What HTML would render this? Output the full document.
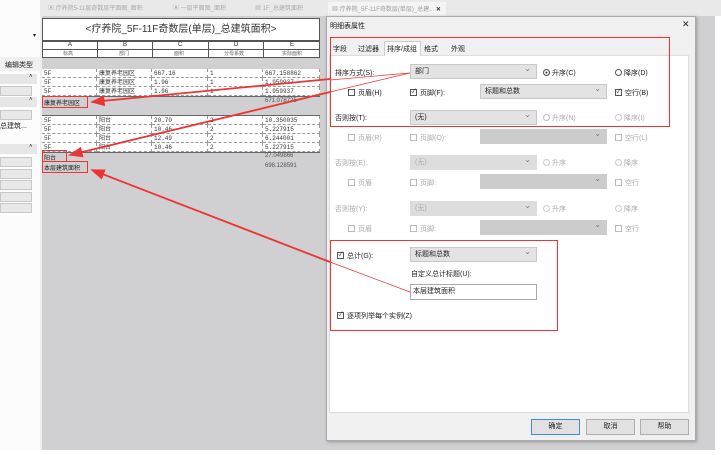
<!DOCTYPE html>
<html><head><meta charset="utf-8"><style>
*{margin:0;padding:0;box-sizing:border-box}
body{width:721px;height:455px;background:#fff;position:relative;overflow:hidden;font-family:"Liberation Sans","Noto Sans CJK SC",sans-serif;font-size:7px;color:#222}
.a{position:absolute}
.t{position:absolute;white-space:nowrap}
.cell{position:absolute;height:9px;border-right:1px dashed #999;border-bottom:1px dashed #999;font-size:6px;line-height:9px;padding-left:2px;background:#fff;color:#333;font-family:"Liberation Mono","Noto Sans CJK SC",monospace}
.dd{position:absolute;background:#e3e3e3;border:1px solid #c8c8c8;height:15px;font-size:7px;line-height:13px;padding-left:4px}
.dd:after{content:"⌄";position:absolute;right:5px;top:-3px;color:#777;font-size:8px}
.dis{color:#aaa}
.cb{position:absolute;width:7px;height:7px;border:1px solid #555;background:#fff;font-size:6px;line-height:5px;text-align:center}
.cbd{border-color:#bbb}
.rd{position:absolute;width:7px;height:7px;border:1px solid #555;border-radius:50%;background:#fff}
.btn{position:absolute;height:16px;width:49px;background:#e1e1e1;border:1px solid #adadad;text-align:center;line-height:14px;font-size:7px}
.lp{position:absolute;left:0;width:32px;height:10px;background:#e8e8e8;border:1px solid #c8c8c8}
</style></head><body>
<div class="a" style="left:40px;top:0;width:290px;height:16px;background:#e9e9e9"></div>
<div class="t" style="left:48px;top:3px;color:#aaa;font-size:6px">▣ 疗养院5-11层奇数层平面图_面积</div>
<div class="t" style="left:173px;top:3px;color:#aaa;font-size:6px">▣ 一层平面图_面积</div>
<div class="t" style="left:255px;top:3px;color:#aaa;font-size:6px">▦ 1F_总建筑面积</div>
<div class="a" style="left:328px;top:0;width:393px;height:16px;background:#e9e9e9"></div>
<div class="a" style="left:328px;top:2px;width:118px;height:14px;background:#f4f4f4"></div>
<div class="t" style="left:332px;top:4px;color:#999;font-size:6px">▦ 疗养院_5F-11F奇数层(单层)_总建... <b style="color:#333">✕</b></div>
<div class="a" style="left:0;top:0;width:40px;height:450px;background:#fcfcfc"></div>
<div class="t" style="left:33px;top:32px;font-size:6px">▾</div>
<div class="a" style="left:0;top:57px;width:40px;height:14px;background:#f0f0f0"></div>
<div class="t" style="left:5px;top:60px;font-size:7px">编辑类型</div>
<div class="a" style="left:0;top:74px;width:37px;height:10px;background:#e6e6e6"></div><div class="t" style="left:29px;top:74px;font-size:6px">˄</div>
<div class="lp" style="top:86px"></div>
<div class="a" style="left:0;top:97px;width:37px;height:10px;background:#e6e6e6"></div><div class="t" style="left:29px;top:97px;font-size:6px">˄</div>
<div class="lp" style="top:110px"></div>
<div class="t" style="left:0;top:121px;font-size:7px">总建筑...</div>
<div class="a" style="left:0;top:144px;width:37px;height:10px;background:#e6e6e6"></div><div class="t" style="left:29px;top:144px;font-size:6px">˄</div>
<div class="lp" style="top:157px"></div><div class="lp" style="top:169px"></div><div class="lp" style="top:180px"></div><div class="lp" style="top:192px"></div><div class="lp" style="top:203px"></div>
<div class="a" style="left:40px;top:16px;width:675px;height:434px;background:#d0cfd1;border-left:2px solid #eee"></div>
<div class="a" style="left:42px;top:18px;width:278px;height:23px;background:#fff;border:1px solid #555;font-size:10px;text-align:center;line-height:21px;color:#333">&lt;疗养院_5F-11F奇数层(单层)_总建筑面积&gt;</div>
<div class="a" style="left:42px;top:41px;width:278px;height:17px;background:#fff;border:1px solid #555"></div>
<div class="a" style="left:42px;top:49px;width:278px;height:1px;background:#555"></div>
<div class="t" style="left:68px;top:42px;font-size:6px">A</div><div class="t" style="left:123px;top:42px;font-size:6px">B</div><div class="t" style="left:178px;top:42px;font-size:6px">C</div><div class="t" style="left:234px;top:42px;font-size:6px">D</div><div class="t" style="left:290px;top:42px;font-size:6px">E</div>
<div class="t" style="left:63px;top:50px;font-size:5px;color:#666">标高</div><div class="t" style="left:119px;top:50px;font-size:5px;color:#666">部门</div><div class="t" style="left:174px;top:50px;font-size:5px;color:#666">面积</div><div class="t" style="left:224px;top:50px;font-size:5px;color:#666">分母系数</div><div class="t" style="left:282px;top:50px;font-size:5px;color:#666">实际面积</div>
<div class="a" style="left:97px;top:41px;width:1px;height:17px;background:#555"></div><div class="a" style="left:152px;top:41px;width:1px;height:17px;background:#555"></div><div class="a" style="left:208px;top:41px;width:1px;height:17px;background:#555"></div><div class="a" style="left:263px;top:41px;width:1px;height:17px;background:#555"></div>
<div class="a" style="left:42px;top:69px;width:278px;height:28px;border:1px solid #666;background:#fff"></div>
<div class="a" style="left:42px;top:115px;width:278px;height:38px;border:1px solid #666;background:#fff"></div>
<div id="rows"></div>
<div class="t" style="left:44px;top:98px;font-size:6px">康复养老园区</div><div class="t" style="left:265px;top:98px;font-size:6px;color:#555">671.078725</div>
<div class="t" style="left:44px;top:153px;font-size:6px">阳台</div><div class="t" style="left:265px;top:153px;font-size:6px;color:#555">27.049866</div>
<div class="t" style="left:44px;top:163px;font-size:6px">本层建筑面积</div><div class="t" style="left:265px;top:163px;font-size:6px;color:#555">698.128591</div>
<div class="a" style="left:42px;top:96px;width:46px;height:12px;border:1.5px solid #e33"></div>
<div class="a" style="left:42px;top:150px;width:25px;height:12px;border:1.5px solid #e33"></div>
<div class="a" style="left:42px;top:161px;width:46px;height:12px;border:1.5px solid #e33"></div>
<div class="a" style="left:326px;top:16px;width:370px;height:425px;background:#f0f0f0;border:1px solid #aaa;box-shadow:1px 1px 3px #999"></div>
<div class="t" style="left:330px;top:21px;font-size:7px">明细表属性</div>
<div class="t" style="left:682px;top:19px;font-size:9px">✕</div>
<div class="a" style="left:329px;top:55px;width:360px;height:358px;background:#fff;border:1px solid #ddd"></div>
<div class="a" style="left:384px;top:41px;width:37px;height:15px;background:#fff;border:1px solid #ccc;border-bottom:none"></div>
<div class="t" style="left:333px;top:44px;font-size:7px">字段</div>
<div class="t" style="left:358px;top:44px;font-size:7px">过滤器</div>
<div class="t" style="left:387px;top:44px;font-size:7px">排序/成组</div>
<div class="t" style="left:424px;top:44px;font-size:7px">格式</div>
<div class="t" style="left:451px;top:44px;font-size:7px">外观</div>
<div class="t" style="left:335px;top:68px">排序方式(S):</div>
<div class="dd" style="left:410px;top:64px;width:127px">部门</div>
<div class="rd" style="left:543px;top:69px;box-shadow:inset 0 0 0 1.5px #fff;background:#333"></div><div class="t" style="left:552px;top:68px">升序(C)</div>
<div class="rd" style="left:615px;top:69px"></div><div class="t" style="left:624px;top:68px">降序(D)</div>
<div class="cb" style="left:348px;top:89px"></div><div class="t" style="left:358px;top:88px">页眉(H)</div>
<div class="cb" style="left:410px;top:89px">✓</div><div class="t" style="left:420px;top:88px">页脚(F):</div>
<div class="dd" style="left:480px;top:84px;width:127px">标题和总数</div>
<div class="cb" style="left:615px;top:89px">✓</div><div class="t" style="left:625px;top:88px">空行(B)</div>
<div class="t" style="left:335px;top:113px">否则按(T):</div>
<div class="dd" style="left:410px;top:110px;width:127px">(无)</div>
<div class="rd" style="left:543px;top:114px;border-color:#bbb"></div><div class="t dis" style="left:552px;top:113px">升序(N)</div>
<div class="rd" style="left:615px;top:114px;border-color:#ccc"></div><div class="t dis" style="left:624px;top:113px">降序(I)</div>
<div class="cb cbd" style="left:348px;top:134px"></div><div class="t dis" style="left:358px;top:133px">页眉(R)</div>
<div class="cb cbd" style="left:410px;top:134px"></div><div class="t dis" style="left:420px;top:133px">页脚(O):</div>
<div class="dd dis" style="left:480px;top:129px;width:127px;background:#ccc;border-color:#ccc"></div>
<div class="cb cbd" style="left:615px;top:134px"></div><div class="t dis" style="left:625px;top:133px">空行(L)</div>
<div class="t dis" style="left:335px;top:158px">否则按(E):</div>
<div class="dd dis" style="left:410px;top:155px;width:127px;background:#ddd;border-color:#ddd">(无)</div>
<div class="rd" style="left:543px;top:159px;border-color:#ccc"></div><div class="t dis" style="left:552px;top:158px">升序</div>
<div class="rd" style="left:615px;top:159px;border-color:#ccc"></div><div class="t dis" style="left:624px;top:158px">降序</div>
<div class="cb cbd" style="left:348px;top:179px"></div><div class="t dis" style="left:358px;top:178px">页眉</div>
<div class="cb cbd" style="left:410px;top:179px"></div><div class="t dis" style="left:420px;top:178px">页脚:</div>
<div class="dd dis" style="left:480px;top:174px;width:127px;background:#ccc;border-color:#ccc"></div>
<div class="cb cbd" style="left:615px;top:179px"></div><div class="t dis" style="left:625px;top:178px">空行</div>
<div class="t dis" style="left:335px;top:204px">否则按(Y):</div>
<div class="dd dis" style="left:410px;top:201px;width:127px;background:#ddd;border-color:#ddd">(无)</div>
<div class="rd" style="left:543px;top:205px;border-color:#ccc"></div><div class="t dis" style="left:552px;top:204px">升序</div>
<div class="rd" style="left:615px;top:205px;border-color:#ccc"></div><div class="t dis" style="left:624px;top:204px">降序</div>
<div class="cb cbd" style="left:348px;top:225px"></div><div class="t dis" style="left:358px;top:224px">页眉</div>
<div class="cb cbd" style="left:410px;top:225px"></div><div class="t dis" style="left:420px;top:224px">页脚:</div>
<div class="dd dis" style="left:480px;top:220px;width:127px;background:#ccc;border-color:#ccc"></div>
<div class="cb cbd" style="left:615px;top:225px"></div><div class="t dis" style="left:625px;top:224px">空行</div>
<div class="cb" style="left:337px;top:252px">✓</div><div class="t" style="left:347px;top:251px">总计(G):</div>
<div class="dd" style="left:410px;top:247px;width:127px">标题和总数</div>
<div class="t" style="left:411px;top:269px">自定义总计标题(U):</div>
<div class="a" style="left:410px;top:284px;width:127px;height:16px;border:1px solid #aaa;background:#fff;font-size:7px;line-height:14px;padding-left:2px">本层建筑面积</div>
<div class="cb" style="left:337px;top:312px">✓</div><div class="t" style="left:347px;top:311px">逐项列举每个实例(Z)</div>
<div class="btn" style="left:531px;top:419px;border:1px solid #3c8ddb">确定</div>
<div class="btn" style="left:586px;top:419px">取消</div>
<div class="btn" style="left:640px;top:419px">帮助</div>
<div class="a" style="left:330px;top:37px;width:340px;height:90px;border:1.5px solid #e33"></div>
<div class="a" style="left:330px;top:240px;width:228px;height:91px;border:1.5px solid #e33"></div>
<svg class="a" style="left:0;top:0" width="721" height="455">
<defs><marker id="m" markerWidth="8" markerHeight="6" refX="7" refY="3" orient="auto"><path d="M0,0L8,3L0,6z" fill="#e33"/></marker></defs>
<g stroke="#e33" fill="none">
<line x1="410" y1="73" x2="330" y2="80" stroke-width="0.7"/>
<line x1="410" y1="73" x2="330" y2="92" stroke-width="0.7"/>
<line x1="330" y1="79" x2="92" y2="102" stroke-width="1.8" marker-end="url(#m)"/>
<line x1="330" y1="92" x2="70" y2="155" stroke-width="1.8" marker-end="url(#m)"/>
<line x1="410" y1="292" x2="330" y2="262" stroke-width="0.7"/>
<line x1="330" y1="262" x2="92" y2="170" stroke-width="1.8" marker-end="url(#m)"/>
</g></svg>
<script>
var r=document.getElementById('rows'),xs=[42,97,152,208,263],ws=[55,55,56,55,57];
var d=[[69,['5F','康复养老园区','667.16','1','667.158862']],[78,['5F','康复养老园区','1.96','1','1.959937']],[87,['5F','康复养老园区','1.96','1','1.959937']],
[116,['5F','阳台','20.70','2','10.350035']],[125,['5F','阳台','10.46','2','5.227915']],[134,['5F','阳台','12.49','2','6.244001']],[143,['5F','阳台','10.46','2','5.227915']]];
var h='';d.forEach(function(x){for(var i=0;i<5;i++)h+='<div class="cell" style="left:'+xs[i]+'px;top:'+x[0]+'px;width:'+ws[i]+'px">'+x[1][i]+'</div>'});r.innerHTML=h;
</script>
</body></html>
